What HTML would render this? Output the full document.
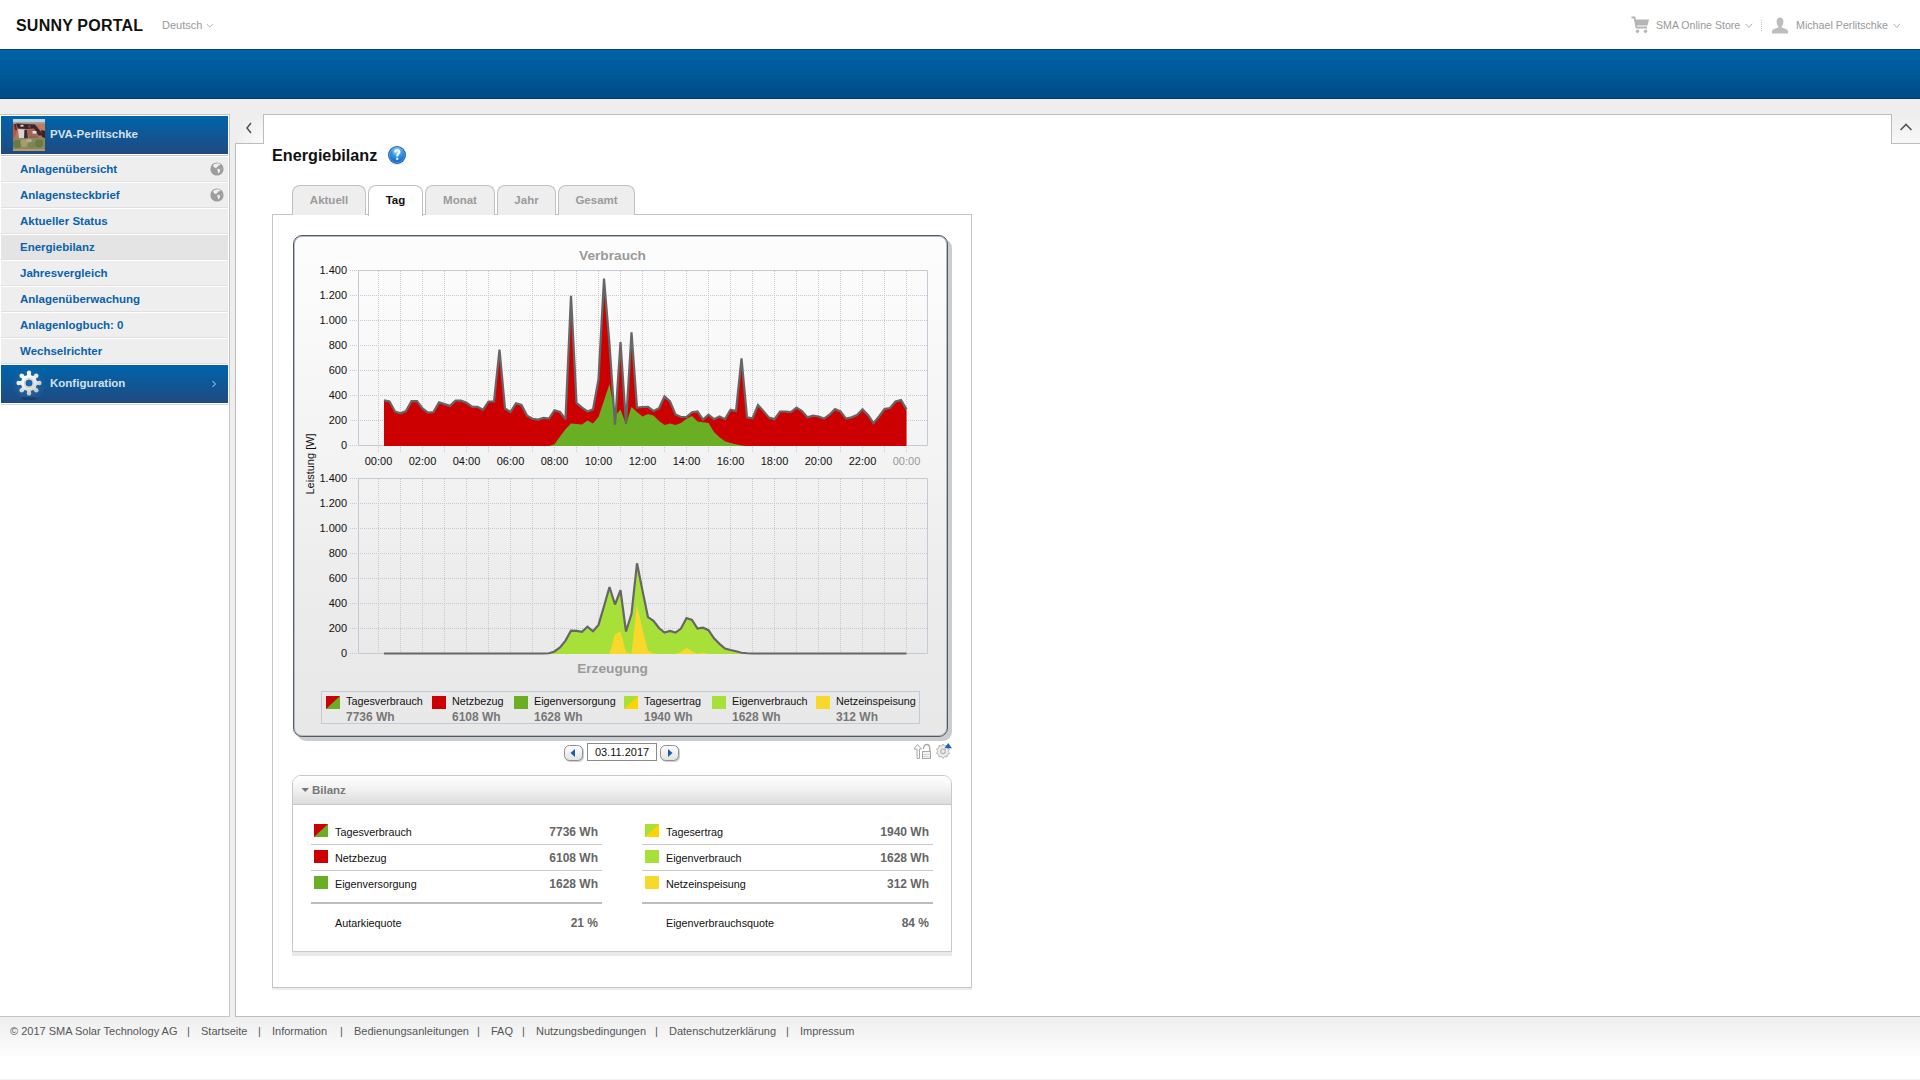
<!DOCTYPE html>
<html><head><meta charset="utf-8">
<style>
*{box-sizing:border-box}
html,body{margin:0;padding:0;width:1920px;height:1080px;overflow:hidden;background:#fff;font-family:"Liberation Sans",sans-serif;position:relative}
.a{position:absolute}
.t{position:absolute;white-space:nowrap;line-height:1}
</style></head><body>
<!-- header -->
<div class="t" style="left:16px;top:17.5px;font-size:16px;font-weight:700;color:#111;letter-spacing:0.2px">SUNNY PORTAL</div>
<div class="t" style="left:162px;top:20px;font-size:11px;color:#999">Deutsch</div>
<svg class="a" style="left:206px;top:23px" width="8" height="6"><path d="M0.8,1 L3.8,4.2 L6.8,1" fill="none" stroke="#b8b8b8" stroke-width="1"/></svg>

<div class="t" style="left:1656px;top:20px;font-size:10.6px;color:#999">SMA Online Store</div>
<div class="t" style="left:1796px;top:20px;font-size:10.7px;color:#999">Michael Perlitschke</div>

<svg class="a" style="left:1631px;top:16px" width="19" height="18" viewBox="0 0 19 18">
<path d="M0.5,1.5 L3.5,1.5 L5.5,11.5 L16,11.5" fill="none" stroke="#b5b5b5" stroke-width="1.8"/>
<path d="M4,3.5 L18,3.5 L16.5,9.5 L5.2,9.5 Z" fill="#b5b5b5"/>
<circle cx="6.5" cy="15.3" r="1.7" fill="#b5b5b5"/><circle cx="14.5" cy="15.3" r="1.7" fill="#b5b5b5"/>
</svg>
<svg class="a" style="left:1745px;top:23px" width="8" height="6"><path d="M0.5,0.8 L3.8,4.5 L7.2,0.8" fill="none" stroke="#b0b0b0" stroke-width="1"/></svg>
<svg class="a" style="left:1761px;top:20px" width="1" height="12"><path d="M0.5,0 V12" stroke="#c8c8c8" stroke-width="1" stroke-dasharray="1,1"/></svg>
<svg class="a" style="left:1771px;top:17px" width="18" height="17" viewBox="0 0 18 17">
<path d="M9,0.5 C11.6,0.5 12.6,2.6 12.4,5 C12.2,7.4 11.2,9 10.6,9.6 L10.8,10.6 C13.5,11.4 16.5,12.4 17,14 L17,16.5 L1,16.5 L1,14 C1.5,12.4 4.5,11.4 7.2,10.6 L7.4,9.6 C6.8,9 5.8,7.4 5.6,5 C5.4,2.6 6.4,0.5 9,0.5 Z" fill="#bdbdbd"/>
</svg>
<svg class="a" style="left:1893px;top:23px" width="8" height="6"><path d="M0.5,0.8 L3.8,4.5 L7.2,0.8" fill="none" stroke="#b0b0b0" stroke-width="1"/></svg>
<!-- blue bar -->
<div class="a" style="left:0;top:49px;width:1920px;height:50px;background:linear-gradient(#0063a9,#005a9c 40%,#004b87);border-top:1px solid #083f72;border-bottom:1px solid #043a6c"></div>
<!-- gray bg -->
<div class="a" style="left:0;top:99px;width:1920px;height:917px;background:#eeeeee"></div>
<div class="a" style="left:0;top:1016px;width:1920px;height:40px;background:linear-gradient(#eeeeee,#fdfdfd)"></div>

<!-- sidebar -->
<div class="a" style="left:0;top:114px;width:230px;height:903px;background:#fff;border:1px solid #c4c4c4;border-left:none"></div>
<div class="a" style="left:1px;top:116px;width:227px;height:38px;background:linear-gradient(#0064ab,#1f4a80)"></div>
<div class="a" style="left:1px;top:155px;width:227px;height:1px;background:#c8c8c8"></div>

<!-- content panel -->
<div class="a" style="left:235px;top:143px;width:1685px;height:874px;background:#fff;border:1px solid #bdbdbd;border-right:none"></div>
<div class="a" style="left:263px;top:114px;width:1629px;height:30px;background:#fff;border:1px solid #bdbdbd;border-bottom:none"></div>

<div class="a" style="left:1px;top:157px;width:227px;height:25px;background:#eeeeee;border-bottom:1px solid #e0e0e0"></div>
<div class="t" style="left:20px;top:164px;font-size:11.5px;font-weight:700;color:#0a62ab">Anlagenübersicht</div>
<div class="a" style="left:1px;top:183px;width:227px;height:25px;background:#eeeeee;border-bottom:1px solid #e0e0e0"></div>
<div class="t" style="left:20px;top:190px;font-size:11.5px;font-weight:700;color:#0a62ab">Anlagensteckbrief</div>
<div class="a" style="left:1px;top:209px;width:227px;height:25px;background:#eeeeee;border-bottom:1px solid #e0e0e0"></div>
<div class="t" style="left:20px;top:216px;font-size:11.5px;font-weight:700;color:#0a62ab">Aktueller Status</div>
<div class="a" style="left:1px;top:235px;width:227px;height:25px;background:#e4e4e4;border-bottom:1px solid #e0e0e0"></div>
<div class="t" style="left:20px;top:242px;font-size:11.5px;font-weight:700;color:#0a62ab">Energiebilanz</div>
<div class="a" style="left:1px;top:261px;width:227px;height:25px;background:#eeeeee;border-bottom:1px solid #e0e0e0"></div>
<div class="t" style="left:20px;top:268px;font-size:11.5px;font-weight:700;color:#0a62ab">Jahresvergleich</div>
<div class="a" style="left:1px;top:287px;width:227px;height:25px;background:#eeeeee;border-bottom:1px solid #e0e0e0"></div>
<div class="t" style="left:20px;top:294px;font-size:11.5px;font-weight:700;color:#0a62ab">Anlagenüberwachung</div>
<div class="a" style="left:1px;top:313px;width:227px;height:25px;background:#eeeeee;border-bottom:1px solid #e0e0e0"></div>
<div class="t" style="left:20px;top:320px;font-size:11.5px;font-weight:700;color:#0a62ab">Anlagenlogbuch: 0</div>
<div class="a" style="left:1px;top:339px;width:227px;height:25px;background:#eeeeee;border-bottom:1px solid #e0e0e0"></div>
<div class="t" style="left:20px;top:346px;font-size:11.5px;font-weight:700;color:#0a62ab">Wechselrichter</div>
<svg class="a" style="left:209.5px;top:161.5px" width="14" height="14" viewBox="0 0 14 14"><circle cx="7" cy="7" r="6.6" fill="#9d9d9d"/><path d="M3.0,3.6 C3.8,2.2 5.4,1.4 6.8,1.6 L8.0,1.2 L9.6,1.8 L10.6,2.6 L9.8,3.4 L8.6,3.0 L8.0,4.2 L6.8,5.4 L5.2,6.0 L4.0,5.2 Z M7.2,7.0 L9.0,6.8 L10.2,8.0 L9.8,9.8 L8.6,11.6 L8.0,10.6 L7.6,8.8 Z M11.2,6.2 L11.8,6.6 L11.4,7.4 Z" fill="#efefef"/></svg>
<svg class="a" style="left:209.5px;top:187.5px" width="14" height="14" viewBox="0 0 14 14"><circle cx="7" cy="7" r="6.6" fill="#9d9d9d"/><path d="M3.0,3.6 C3.8,2.2 5.4,1.4 6.8,1.6 L8.0,1.2 L9.6,1.8 L10.6,2.6 L9.8,3.4 L8.6,3.0 L8.0,4.2 L6.8,5.4 L5.2,6.0 L4.0,5.2 Z M7.2,7.0 L9.0,6.8 L10.2,8.0 L9.8,9.8 L8.6,11.6 L8.0,10.6 L7.6,8.8 Z M11.2,6.2 L11.8,6.6 L11.4,7.4 Z" fill="#efefef"/></svg>
<div class="a" style="left:1px;top:365px;width:227px;height:38px;background:linear-gradient(#0064ab,#1f4a80)"></div>
<div class="a" style="left:1px;top:404px;width:227px;height:1px;background:#d8d8d8"></div>
<div class="t" style="left:50px;top:378px;font-size:11.5px;font-weight:700;color:#d3e0ee">Konfiguration</div>
<svg class="a" style="left:211px;top:380px" width="6" height="8"><path d="M1.5,1 L4.5,4 L1.5,7" fill="none" stroke="#c5d5ea" stroke-width="1"/></svg>
<svg class="a" style="left:0;top:355px" width="60" height="60" viewBox="0 355 60 60"><defs>
<radialGradient id="glow" cx="0.5" cy="0.5" r="0.5"><stop offset="0" stop-color="#5d9ad0" stop-opacity="0.35"/><stop offset="1" stop-color="#5d9ad0" stop-opacity="0"/></radialGradient>
<radialGradient id="gg" gradientUnits="userSpaceOnUse" cx="26" cy="378" r="16"><stop offset="0" stop-color="#ffffff"/><stop offset="0.6" stop-color="#ececec"/><stop offset="1" stop-color="#c8c8c8"/></radialGradient></defs>
<circle cx="29" cy="385" r="17" fill="url(#glow)"/>
<ellipse cx="29" cy="398.5" rx="8" ry="1.6" fill="#0d2c55" opacity="0.45"/>
<g stroke="url(#gg)" stroke-width="3.8"><line x1="29.00" y1="377.00" x2="29.00" y2="372.60"/><line x1="33.24" y1="378.76" x2="36.35" y2="375.65"/><line x1="35.00" y1="383.00" x2="39.40" y2="383.00"/><line x1="33.24" y1="387.24" x2="36.35" y2="390.35"/><line x1="29.00" y1="389.00" x2="29.00" y2="393.40"/><line x1="24.76" y1="387.24" x2="21.65" y2="390.35"/><line x1="23.00" y1="383.00" x2="18.60" y2="383.00"/><line x1="24.76" y1="378.76" x2="21.65" y2="375.65"/></g>
<g fill="url(#gg)"><circle cx="29.00" cy="372.60" r="2.2"/><circle cx="36.35" cy="375.65" r="2.2"/><circle cx="39.40" cy="383.00" r="2.2"/><circle cx="36.35" cy="390.35" r="2.2"/><circle cx="29.00" cy="393.40" r="2.2"/><circle cx="21.65" cy="390.35" r="2.2"/><circle cx="18.60" cy="383.00" r="2.2"/><circle cx="21.65" cy="375.65" r="2.2"/></g>
<circle cx="29" cy="383" r="8" fill="url(#gg)"/>
<circle cx="29" cy="383" r="4.6" fill="none" stroke="#d4d4d4" stroke-width="1.2"/>
<circle cx="29" cy="383" r="3.5" fill="#1f64a6"/>
</svg>
<div class="t" style="left:50px;top:129px;font-size:11.5px;font-weight:700;color:#d3e0ee">PVA-Perlitschke</div>
<svg class="a" style="left:13px;top:119px" width="32" height="32" viewBox="0 0 32 32">
<defs><filter id="bl" x="-10%" y="-10%" width="120%" height="120%"><feGaussianBlur stdDeviation="0.35"/></filter><clipPath id="cp"><rect width="32" height="32"/></clipPath></defs>
<g clip-path="url(#cp)"><g filter="url(#bl)">
<rect x="-2" y="-2" width="36" height="36" fill="#b2785e"/>
<rect x="-2" y="-2" width="36" height="5.5" fill="#b4d8f0"/>
<path d="M-2,3.5 L34,3.5 L34,5.5 L-2,5.5 Z" fill="#b89080"/>
<path d="M-2,5 L3,5 L4,12 L1,20 L-2,20 Z" fill="#b85a3a"/>
<path d="M1,5 L3,5 L4,11 L2,11 Z" fill="#5a2a22"/>
<path d="M3,4.5 L22,5.5 L28,13 L29.5,16.5 L25.5,16.5 L21,9.5 L14,10 L5,9.5 Z" fill="#3a262e"/>
<rect x="7.5" y="5.8" width="3" height="1.8" fill="#e0dde0"/>
<rect x="15" y="6.5" width="2.5" height="2" fill="#6a5060"/>
<path d="M5,10 L11.5,10.5 L11.5,19 L6,19 Z" fill="#d8d4d0"/>
<path d="M11.5,11 L14,11 L15,20 L11,20 Z" fill="#352a3a"/>
<path d="M14,10.5 L21,10 L24,16 L16,18 Z" fill="#a66450"/>
<rect x="19.5" y="12" width="4" height="2.6" fill="#e4dedc"/>
<path d="M16,17 L25,16.5 L25,19.5 L16,20 Z" fill="#7e6a60"/>
<path d="M28,11 L32,12 L32,19 L29,18 Z" fill="#3a2228"/>
<path d="M25,5 L34,5 L34,11 L28,11 Z" fill="#c07e5e"/>
<path d="M-2,20 C4,18 9,20 14,19 C19,20 25,18 34,20 L34,34 L-2,34 Z" fill="#8c8858"/>
<ellipse cx="4" cy="25" rx="4" ry="4" fill="#667a48"/>
<ellipse cx="11" cy="24" rx="3.5" ry="4" fill="#a89a70"/>
<ellipse cx="19" cy="26" rx="4" ry="3" fill="#7a8650"/>
<ellipse cx="26" cy="24.5" rx="4" ry="4" fill="#6a7a44"/>
<ellipse cx="16" cy="21.5" rx="3" ry="1.8" fill="#b8a890"/>
<rect x="-2" y="30" width="36" height="4" fill="#bc9670"/>
</g></g></svg>
<div class="a" style="left:236px;top:115px;width:27px;height:28px;background:radial-gradient(circle at 90% 90%, #fafafa 0, #eeeeee 70%)"></div>
<svg class="a" style="left:244px;top:121px" width="10" height="14"><path d="M7,2 L3,7 L7,12" fill="none" stroke="#555" stroke-width="1.6"/></svg>
<div class="a" style="left:1892px;top:115px;width:28px;height:28px;background:linear-gradient(#eeeeee,#f8f8f8)"></div>
<svg class="a" style="left:1899px;top:122px" width="14" height="10"><path d="M1.5,8 L7,2.5 L12.5,8" fill="none" stroke="#555" stroke-width="1.6"/></svg>
<div class="t" style="left:272px;top:147px;font-size:16.2px;font-weight:700;color:#111">Energiebilanz</div>
<svg class="a" style="left:386px;top:144px" width="22" height="22" viewBox="0 0 22 22"><defs><radialGradient id="hq" cx="0.5" cy="0.25" r="0.75"><stop offset="0" stop-color="#c8f0ff"/><stop offset="0.45" stop-color="#3d96e0"/><stop offset="1" stop-color="#0a62c0"/></radialGradient></defs>
<ellipse cx="11" cy="19.5" rx="7" ry="1.5" fill="#000" opacity="0.08"/>
<circle cx="11" cy="11" r="9" fill="#1d62b8"/><circle cx="11" cy="11" r="7.8" fill="url(#hq)"/><circle cx="11" cy="11" r="7.6" fill="none" stroke="#8ec8f0" stroke-width="0.6" opacity="0.7"/>
<path d="M8.2,8.3 C8.2,6.2 9.5,5.2 11.2,5.2 C13,5.2 14.3,6.3 14.3,7.9 C14.3,9.9 12.1,10.2 12.1,12.5 L10.3,12.5 C10.3,9.7 12.3,9.5 12.3,8 C12.3,7.2 11.9,6.8 11.1,6.8 C10.3,6.8 10,7.4 10,8.3 Z" fill="#fff"/><rect x="10.2" y="13.8" width="2" height="2" fill="#fff"/></svg>
<div class="a" style="left:272px;top:214px;width:700px;height:774px;border:1px solid #c4c4c4;background:#fff;box-shadow:0 2px 0 #ededed"></div>
<div class="a" style="left:292px;top:185px;width:74px;height:30px;background:#eeeeee;border:1px solid #c0c0c0;border-bottom:none;border-radius:8px 8px 0 0"></div>
<div class="t" style="left:292px;width:74px;text-align:center;top:195px;font-size:11.5px;font-weight:700;color:#9a9a9a">Aktuell</div>
<div class="a" style="left:368px;top:185px;width:55px;height:31px;background:#fff;border:1px solid #c0c0c0;border-bottom:none;border-radius:8px 8px 0 0"></div>
<div class="t" style="left:368px;width:55px;text-align:center;top:195px;font-size:11.5px;font-weight:700;color:#111">Tag</div>
<div class="a" style="left:425px;top:185px;width:70px;height:30px;background:#eeeeee;border:1px solid #c0c0c0;border-bottom:none;border-radius:8px 8px 0 0"></div>
<div class="t" style="left:425px;width:70px;text-align:center;top:195px;font-size:11.5px;font-weight:700;color:#9a9a9a">Monat</div>
<div class="a" style="left:497px;top:185px;width:59px;height:30px;background:#eeeeee;border:1px solid #c0c0c0;border-bottom:none;border-radius:8px 8px 0 0"></div>
<div class="t" style="left:497px;width:59px;text-align:center;top:195px;font-size:11.5px;font-weight:700;color:#9a9a9a">Jahr</div>
<div class="a" style="left:558px;top:185px;width:77px;height:30px;background:#eeeeee;border:1px solid #c0c0c0;border-bottom:none;border-radius:8px 8px 0 0"></div>
<div class="t" style="left:558px;width:77px;text-align:center;top:195px;font-size:11.5px;font-weight:700;color:#9a9a9a">Gesamt</div>
<div class="a" style="left:297px;top:239px;width:655px;height:502px;background:#cccccc;border-radius:9px"></div>
<div class="a" style="left:293px;top:235px;width:655px;height:502px;border:1px solid #4f5b67;box-shadow:inset 0 0 0 1px #b4bbc2;border-radius:9px;background:linear-gradient(#fdfdfd,#f3f3f3 45%,#ebebeb 75%,#e8e8e8)"></div>
<svg style="position:absolute;left:0;top:0" width="1920" height="1080">
<defs>
<linearGradient id="plotbg" x1="0" y1="0" x2="0" y2="1"><stop offset="0" stop-color="#fcfcfc"/><stop offset="1" stop-color="#f2f2f2"/></linearGradient>
<linearGradient id="plotbg2" x1="0" y1="0" x2="0" y2="1"><stop offset="0" stop-color="#f2f2f2"/><stop offset="1" stop-color="#eaeaea"/></linearGradient>
</defs>
<g stroke="#c3cad2" stroke-width="1" stroke-dasharray="1,1" fill="none">
<line x1="350" y1="420.5" x2="927" y2="420.5" /><line x1="350" y1="395.5" x2="927" y2="395.5" /><line x1="350" y1="370.5" x2="927" y2="370.5" /><line x1="350" y1="345.5" x2="927" y2="345.5" /><line x1="350" y1="320.5" x2="927" y2="320.5" /><line x1="350" y1="295.5" x2="927" y2="295.5" /><line x1="350" y1="270.5" x2="927" y2="270.5" /><line x1="350" y1="445.5" x2="358" y2="445.5" /><line x1="378.5" y1="271" x2="378.5" y2="453" /><line x1="400.5" y1="271" x2="400.5" y2="453" /><line x1="422.5" y1="271" x2="422.5" y2="453" /><line x1="444.5" y1="271" x2="444.5" y2="453" /><line x1="466.5" y1="271" x2="466.5" y2="453" /><line x1="488.5" y1="271" x2="488.5" y2="453" /><line x1="510.5" y1="271" x2="510.5" y2="453" /><line x1="532.5" y1="271" x2="532.5" y2="453" /><line x1="554.5" y1="271" x2="554.5" y2="453" /><line x1="576.5" y1="271" x2="576.5" y2="453" /><line x1="598.5" y1="271" x2="598.5" y2="453" /><line x1="620.5" y1="271" x2="620.5" y2="453" /><line x1="642.5" y1="271" x2="642.5" y2="453" /><line x1="664.5" y1="271" x2="664.5" y2="453" /><line x1="686.5" y1="271" x2="686.5" y2="453" /><line x1="708.5" y1="271" x2="708.5" y2="453" /><line x1="730.5" y1="271" x2="730.5" y2="453" /><line x1="752.5" y1="271" x2="752.5" y2="453" /><line x1="774.5" y1="271" x2="774.5" y2="453" /><line x1="796.5" y1="271" x2="796.5" y2="453" /><line x1="818.5" y1="271" x2="818.5" y2="453" /><line x1="840.5" y1="271" x2="840.5" y2="453" /><line x1="862.5" y1="271" x2="862.5" y2="453" /><line x1="884.5" y1="271" x2="884.5" y2="453" /><line x1="906.5" y1="271" x2="906.5" y2="453" />
<line x1="350" y1="628.5" x2="927" y2="628.5" /><line x1="350" y1="603.5" x2="927" y2="603.5" /><line x1="350" y1="578.5" x2="927" y2="578.5" /><line x1="350" y1="553.5" x2="927" y2="553.5" /><line x1="350" y1="528.5" x2="927" y2="528.5" /><line x1="350" y1="503.5" x2="927" y2="503.5" /><line x1="350" y1="478.5" x2="927" y2="478.5" /><line x1="350" y1="653.5" x2="358" y2="653.5" /><line x1="378.5" y1="479" x2="378.5" y2="654" /><line x1="400.5" y1="479" x2="400.5" y2="654" /><line x1="422.5" y1="479" x2="422.5" y2="654" /><line x1="444.5" y1="479" x2="444.5" y2="654" /><line x1="466.5" y1="479" x2="466.5" y2="654" /><line x1="488.5" y1="479" x2="488.5" y2="654" /><line x1="510.5" y1="479" x2="510.5" y2="654" /><line x1="532.5" y1="479" x2="532.5" y2="654" /><line x1="554.5" y1="479" x2="554.5" y2="654" /><line x1="576.5" y1="479" x2="576.5" y2="654" /><line x1="598.5" y1="479" x2="598.5" y2="654" /><line x1="620.5" y1="479" x2="620.5" y2="654" /><line x1="642.5" y1="479" x2="642.5" y2="654" /><line x1="664.5" y1="479" x2="664.5" y2="654" /><line x1="686.5" y1="479" x2="686.5" y2="654" /><line x1="708.5" y1="479" x2="708.5" y2="654" /><line x1="730.5" y1="479" x2="730.5" y2="654" /><line x1="752.5" y1="479" x2="752.5" y2="654" /><line x1="774.5" y1="479" x2="774.5" y2="654" /><line x1="796.5" y1="479" x2="796.5" y2="654" /><line x1="818.5" y1="479" x2="818.5" y2="654" /><line x1="840.5" y1="479" x2="840.5" y2="654" /><line x1="862.5" y1="479" x2="862.5" y2="654" /><line x1="884.5" y1="479" x2="884.5" y2="654" /><line x1="906.5" y1="479" x2="906.5" y2="654" />
</g>
<g fill="none" stroke="#c3cad2" stroke-width="1">
<path d="M358.5,270.5 H927.5 V445.5 H358.5 Z"/>
<path d="M358.5,478.5 H927.5 V653.5 H358.5 Z"/>
</g>
<path d="M384.00,446.00 L384.00,400.75 L389.50,402.00 L395.00,412.00 L400.50,413.75 L406.00,411.62 L411.50,401.62 L417.00,401.62 L422.50,409.00 L428.00,413.12 L433.50,412.50 L439.00,402.88 L444.50,404.62 L450.00,406.38 L455.50,401.12 L461.00,401.12 L466.50,403.25 L472.00,407.25 L477.50,407.25 L483.00,410.25 L488.50,402.00 L494.00,402.00 L499.50,350.00 L505.00,409.00 L510.50,412.50 L516.00,403.75 L521.50,405.50 L527.00,416.12 L532.50,419.25 L538.00,420.12 L543.50,418.38 L549.00,419.12 L554.50,410.75 L560.00,412.50 L565.50,419.62 L571.00,296.38 L576.50,403.25 L582.00,408.12 L587.50,412.00 L593.00,409.88 L598.50,379.75 L604.00,279.12 L609.50,344.75 L615.00,425.12 L620.50,342.50 L626.00,424.38 L631.50,332.75 L637.00,408.12 L642.50,407.50 L648.00,407.25 L653.50,411.38 L659.00,408.62 L664.50,396.75 L670.00,402.00 L675.50,414.88 L681.00,417.50 L686.50,417.50 L692.00,412.75 L697.50,412.00 L703.00,420.12 L708.50,415.25 L714.00,419.62 L719.50,417.00 L725.00,419.62 L730.50,410.25 L736.00,411.62 L741.50,358.88 L747.00,417.88 L752.50,418.75 L758.00,405.50 L763.50,411.62 L769.00,418.12 L774.50,419.62 L780.00,412.00 L785.50,412.00 L791.00,412.50 L796.50,408.12 L802.00,411.62 L807.50,417.88 L813.00,416.12 L818.50,417.00 L824.00,419.12 L829.50,415.25 L835.00,409.50 L840.50,412.00 L846.00,419.12 L851.50,417.88 L857.00,415.50 L862.50,409.88 L868.00,415.50 L873.50,423.62 L879.00,417.00 L884.50,409.50 L890.00,408.50 L895.50,402.00 L901.00,400.62 L906.50,409.88 L906.50,446.00 Z" fill="#cc0000"/>
<path d="M549.00,446.00 L549.00,446.00 L554.50,444.25 L560.00,436.38 L565.50,429.25 L571.00,423.62 L576.50,424.00 L582.00,424.38 L587.50,420.50 L593.00,423.62 L598.50,417.00 L604.00,400.50 L609.50,383.88 L615.00,415.50 L620.50,409.62 L626.00,424.62 L631.50,407.12 L637.00,412.12 L642.50,416.38 L648.00,413.88 L653.50,415.50 L659.00,421.00 L664.50,424.88 L670.00,423.62 L675.50,424.88 L681.00,423.12 L686.50,418.75 L692.00,416.12 L697.50,421.38 L703.00,422.25 L708.50,423.12 L714.00,431.88 L719.50,437.25 L725.00,441.25 L730.50,443.00 L736.00,444.25 L741.50,445.50 L747.00,446.00 L747.00,446.00 Z" fill="#6aae23"/>
<path d="M384.00,400.25 L389.50,401.50 L395.00,411.50 L400.50,413.25 L406.00,411.12 L411.50,401.12 L417.00,401.12 L422.50,408.50 L428.00,412.62 L433.50,412.00 L439.00,402.38 L444.50,404.12 L450.00,405.88 L455.50,400.62 L461.00,400.62 L466.50,402.75 L472.00,406.75 L477.50,406.75 L483.00,409.75 L488.50,401.50 L494.00,401.50 L499.50,349.50 L505.00,408.50 L510.50,412.00 L516.00,403.25 L521.50,405.00 L527.00,415.62 L532.50,418.75 L538.00,419.62 L543.50,417.88 L549.00,418.62 L554.50,410.25 L560.00,412.00 L565.50,419.12 L571.00,295.88 L576.50,402.75 L582.00,407.62 L587.50,411.50 L593.00,409.38 L598.50,379.25 L604.00,278.62 L609.50,344.25 L615.00,424.62 L620.50,342.00 L626.00,423.88 L631.50,332.25 L637.00,407.62 L642.50,407.00 L648.00,406.75 L653.50,410.88 L659.00,408.12 L664.50,396.25 L670.00,401.50 L675.50,414.38 L681.00,417.00 L686.50,417.00 L692.00,412.25 L697.50,411.50 L703.00,419.62 L708.50,414.75 L714.00,419.12 L719.50,416.50 L725.00,419.12 L730.50,409.75 L736.00,411.12 L741.50,358.38 L747.00,417.38 L752.50,418.25 L758.00,405.00 L763.50,411.12 L769.00,417.62 L774.50,419.12 L780.00,411.50 L785.50,411.50 L791.00,412.00 L796.50,407.62 L802.00,411.12 L807.50,417.38 L813.00,415.62 L818.50,416.50 L824.00,418.62 L829.50,414.75 L835.00,409.00 L840.50,411.50 L846.00,418.62 L851.50,417.38 L857.00,415.00 L862.50,409.38 L868.00,415.00 L873.50,423.12 L879.00,416.50 L884.50,409.00 L890.00,408.00 L895.50,401.50 L901.00,400.12 L906.50,409.38 " fill="none" stroke="#666" stroke-width="2.2" stroke-linejoin="miter" stroke-miterlimit="2.5"/>
<path d="M543.50,654.00 L543.50,654.00 L549.00,653.75 L554.50,652.00 L560.00,648.00 L565.50,641.12 L571.00,631.12 L576.50,631.38 L582.00,632.25 L587.50,627.12 L593.00,631.75 L598.50,625.38 L604.00,606.75 L609.50,587.50 L615.00,605.00 L620.50,590.75 L626.00,632.00 L631.50,614.25 L637.00,563.75 L642.50,591.25 L648.00,617.62 L653.50,621.38 L659.00,628.50 L664.50,633.12 L670.00,631.38 L675.50,633.12 L681.00,629.12 L686.50,618.50 L692.00,620.50 L697.50,629.12 L703.00,628.25 L708.50,630.62 L714.00,638.88 L719.50,644.38 L725.00,649.00 L730.50,650.50 L736.00,651.75 L741.50,653.25 L747.00,653.75 L752.50,654.00 L752.50,654.00 Z" fill="#a8e03a"/>
<path d="M609.50,654.00 L609.50,654.00 L615.00,634.25 L620.50,631.38 L626.00,652.00 L631.50,654.00 L637.00,604.50 L642.50,629.25 L648.00,650.88 L653.50,653.25 L659.00,654.00 L675.50,654.00 L681.00,652.00 L686.50,647.75 L692.00,651.50 L697.50,654.00 L703.00,652.62 L708.50,654.00 L708.50,654.00 Z" fill="#f8d82a"/>
<path d="M384.00,653.50 L389.50,653.50 L395.00,653.50 L400.50,653.50 L406.00,653.50 L411.50,653.50 L417.00,653.50 L422.50,653.50 L428.00,653.50 L433.50,653.50 L439.00,653.50 L444.50,653.50 L450.00,653.50 L455.50,653.50 L461.00,653.50 L466.50,653.50 L472.00,653.50 L477.50,653.50 L483.00,653.50 L488.50,653.50 L494.00,653.50 L499.50,653.50 L505.00,653.50 L510.50,653.50 L516.00,653.50 L521.50,653.50 L527.00,653.50 L532.50,653.50 L538.00,653.50 L543.50,653.50 L549.00,653.25 L554.50,651.50 L560.00,647.50 L565.50,640.62 L571.00,630.62 L576.50,630.88 L582.00,631.75 L587.50,626.62 L593.00,631.25 L598.50,624.88 L604.00,606.25 L609.50,587.00 L615.00,604.50 L620.50,590.25 L626.00,631.50 L631.50,613.75 L637.00,563.25 L642.50,590.75 L648.00,617.12 L653.50,620.88 L659.00,628.00 L664.50,632.62 L670.00,630.88 L675.50,632.62 L681.00,628.62 L686.50,618.00 L692.00,620.00 L697.50,628.62 L703.00,627.75 L708.50,630.12 L714.00,638.38 L719.50,643.88 L725.00,648.50 L730.50,650.00 L736.00,651.25 L741.50,652.75 L747.00,653.25 L752.50,653.50 L758.00,653.50 L763.50,653.50 L769.00,653.50 L774.50,653.50 L780.00,653.50 L785.50,653.50 L791.00,653.50 L796.50,653.50 L802.00,653.50 L807.50,653.50 L813.00,653.50 L818.50,653.50 L824.00,653.50 L829.50,653.50 L835.00,653.50 L840.50,653.50 L846.00,653.50 L851.50,653.50 L857.00,653.50 L862.50,653.50 L868.00,653.50 L873.50,653.50 L879.00,653.50 L884.50,653.50 L890.00,653.50 L895.50,653.50 L901.00,653.50 L906.50,653.50 " fill="none" stroke="#666" stroke-width="2.2" stroke-linejoin="miter" stroke-miterlimit="2.5"/>
</svg>
<div class="a" style="left:0;top:1079px;width:1920px;height:1px;background:#efefef"></div>
<div class="t" style="left:265px;width:695px;text-align:center;top:249px;font-size:13.7px;font-weight:700;color:#9a9a9a">Verbrauch</div>
<div class="t" style="left:265px;width:695px;text-align:center;top:662px;font-size:13.7px;font-weight:700;color:#9a9a9a">Erzeugung</div>
<div class="t" style="left:287px;width:60px;text-align:right;top:440px;font-size:11px;color:#111">0</div>
<div class="t" style="left:287px;width:60px;text-align:right;top:648px;font-size:11px;color:#111">0</div>
<div class="t" style="left:287px;width:60px;text-align:right;top:415px;font-size:11px;color:#111">200</div>
<div class="t" style="left:287px;width:60px;text-align:right;top:623px;font-size:11px;color:#111">200</div>
<div class="t" style="left:287px;width:60px;text-align:right;top:390px;font-size:11px;color:#111">400</div>
<div class="t" style="left:287px;width:60px;text-align:right;top:598px;font-size:11px;color:#111">400</div>
<div class="t" style="left:287px;width:60px;text-align:right;top:365px;font-size:11px;color:#111">600</div>
<div class="t" style="left:287px;width:60px;text-align:right;top:573px;font-size:11px;color:#111">600</div>
<div class="t" style="left:287px;width:60px;text-align:right;top:340px;font-size:11px;color:#111">800</div>
<div class="t" style="left:287px;width:60px;text-align:right;top:548px;font-size:11px;color:#111">800</div>
<div class="t" style="left:287px;width:60px;text-align:right;top:315px;font-size:11px;color:#111">1.000</div>
<div class="t" style="left:287px;width:60px;text-align:right;top:523px;font-size:11px;color:#111">1.000</div>
<div class="t" style="left:287px;width:60px;text-align:right;top:290px;font-size:11px;color:#111">1.200</div>
<div class="t" style="left:287px;width:60px;text-align:right;top:498px;font-size:11px;color:#111">1.200</div>
<div class="t" style="left:287px;width:60px;text-align:right;top:265px;font-size:11px;color:#111">1.400</div>
<div class="t" style="left:287px;width:60px;text-align:right;top:473px;font-size:11px;color:#111">1.400</div>
<div class="t" style="left:358.5px;width:40px;text-align:center;top:456px;font-size:11px;color:#111">00:00</div>
<div class="t" style="left:402.5px;width:40px;text-align:center;top:456px;font-size:11px;color:#111">02:00</div>
<div class="t" style="left:446.5px;width:40px;text-align:center;top:456px;font-size:11px;color:#111">04:00</div>
<div class="t" style="left:490.5px;width:40px;text-align:center;top:456px;font-size:11px;color:#111">06:00</div>
<div class="t" style="left:534.5px;width:40px;text-align:center;top:456px;font-size:11px;color:#111">08:00</div>
<div class="t" style="left:578.5px;width:40px;text-align:center;top:456px;font-size:11px;color:#111">10:00</div>
<div class="t" style="left:622.5px;width:40px;text-align:center;top:456px;font-size:11px;color:#111">12:00</div>
<div class="t" style="left:666.5px;width:40px;text-align:center;top:456px;font-size:11px;color:#111">14:00</div>
<div class="t" style="left:710.5px;width:40px;text-align:center;top:456px;font-size:11px;color:#111">16:00</div>
<div class="t" style="left:754.5px;width:40px;text-align:center;top:456px;font-size:11px;color:#111">18:00</div>
<div class="t" style="left:798.5px;width:40px;text-align:center;top:456px;font-size:11px;color:#111">20:00</div>
<div class="t" style="left:842.5px;width:40px;text-align:center;top:456px;font-size:11px;color:#111">22:00</div>
<div class="t" style="left:886.5px;width:40px;text-align:center;top:456px;font-size:11px;color:#999">00:00</div>
<div class="t" style="left:280px;top:459px;width:60px;text-align:center;font-size:11px;color:#111;transform:rotate(-90deg)">Leistung [W]</div>
<div class="a" style="left:321px;top:691px;width:599px;height:33px;border:1px solid #c3cad2"></div>
<svg class="a" style="left:326px;top:696px" width="14" height="13"><rect width="14" height="13" fill="#6aae23"/><path d="M0,0 L14,0 L0,13 Z" fill="#cc0000"/></svg>
<div class="t" style="left:346px;top:696px;font-size:10.8px;color:#111">Tagesverbrauch</div>
<div class="t" style="left:346px;top:711px;font-size:12px;font-weight:700;color:#777">7736 Wh</div>
<div class="a" style="left:432px;top:696px;width:14px;height:13px;background:#cc0000"></div>
<div class="t" style="left:452px;top:696px;font-size:10.8px;color:#111">Netzbezug</div>
<div class="t" style="left:452px;top:711px;font-size:12px;font-weight:700;color:#777">6108 Wh</div>
<div class="a" style="left:514px;top:696px;width:14px;height:13px;background:#6aae23"></div>
<div class="t" style="left:534px;top:696px;font-size:10.8px;color:#111">Eigenversorgung</div>
<div class="t" style="left:534px;top:711px;font-size:12px;font-weight:700;color:#777">1628 Wh</div>
<svg class="a" style="left:624px;top:696px" width="14" height="13"><rect width="14" height="13" fill="#ffd200"/><path d="M0,0 L14,0 L0,13 Z" fill="#a8e03a"/></svg>
<div class="t" style="left:644px;top:696px;font-size:10.8px;color:#111">Tagesertrag</div>
<div class="t" style="left:644px;top:711px;font-size:12px;font-weight:700;color:#777">1940 Wh</div>
<div class="a" style="left:712px;top:696px;width:14px;height:13px;background:#a8e03a"></div>
<div class="t" style="left:732px;top:696px;font-size:10.8px;color:#111">Eigenverbrauch</div>
<div class="t" style="left:732px;top:711px;font-size:12px;font-weight:700;color:#777">1628 Wh</div>
<div class="a" style="left:816px;top:696px;width:14px;height:13px;background:#f8d82a"></div>
<div class="t" style="left:836px;top:696px;font-size:10.8px;color:#111">Netzeinspeisung</div>
<div class="t" style="left:836px;top:711px;font-size:12px;font-weight:700;color:#777">312 Wh</div>
<svg class="a" style="left:563px;top:744px" width="22" height="19" viewBox="0 0 22 19"><defs><linearGradient id="bg564" x1="0" y1="0" x2="0" y2="1"><stop offset="0" stop-color="#ffffff"/><stop offset="1" stop-color="#e2e2e2"/></linearGradient></defs><rect x="2" y="2" width="19" height="16" rx="5" fill="#d0d0d0"/><rect x="1.5" y="1.5" width="18" height="15" rx="5" fill="url(#bg564)" stroke="#8f8f8f" stroke-width="1"/><path d="M7.5,9 L12,5 L12,13 Z" fill="#1a5bb0"/></svg>
<svg class="a" style="left:659px;top:744px" width="22" height="19" viewBox="0 0 22 19"><defs><linearGradient id="bg660" x1="0" y1="0" x2="0" y2="1"><stop offset="0" stop-color="#ffffff"/><stop offset="1" stop-color="#e2e2e2"/></linearGradient></defs><rect x="2" y="2" width="19" height="16" rx="5" fill="#d0d0d0"/><rect x="1.5" y="1.5" width="18" height="15" rx="5" fill="url(#bg660)" stroke="#8f8f8f" stroke-width="1"/><path d="M13.5,9 L9,5 L9,13 Z" fill="#1a5bb0"/></svg>
<div class="a" style="left:587px;top:743px;width:70px;height:18px;border:1px solid #8a8a8a;background:#fff"></div>
<div class="t" style="left:587px;width:70px;text-align:center;top:747px;font-size:11px;color:#111">03.11.2017</div>
<svg class="a" style="left:912px;top:742px" width="40" height="20" viewBox="0 0 40 20">
<path d="M5.5,2.5 L9.5,7 L7.5,7 L7.5,16.5 L5,16.5 L5,7 L2,7 Z" fill="#fff" stroke="#a8a8a8" stroke-width="1"/>
<path d="M11.5,7 C11.5,3.8 12.8,2.5 14.7,2.5 C16.6,2.5 17.8,3.8 17.8,7 L17.8,9.5" fill="none" stroke="#a8a8a8" stroke-width="1.3"/>
<rect x="10.5" y="9.5" width="8" height="7" fill="#f4f4f4" stroke="#a8a8a8" stroke-width="1"/>
<path d="M11,12.5 H18 M11,14.5 H18" stroke="#cfcfcf" stroke-width="0.8"/>
<path d="M31,2 L32.5,4 L35,3.5 L35.3,6 L37.5,7 L36.3,9.3 L37.5,11.5 L35.3,12.5 L35,15 L32.5,14.5 L31,16.5 L29.5,14.5 L27,15 L26.7,12.5 L24.5,11.5 L25.7,9.3 L24.5,7 L26.7,6 L27,3.5 L29.5,4 Z" fill="#ececec" stroke="#b5b5b5" stroke-width="1"/>
<circle cx="31" cy="9.3" r="2.3" fill="none" stroke="#b5b5b5" stroke-width="1.2"/>
<path d="M32.5,6.2 L40,6.2 L36.2,1 Z" fill="#1766c8"/>
</svg>
<div class="a" style="left:292px;top:775px;width:660px;height:181px;background:#e9e9e9;border-radius:9px 9px 0 0"></div>
<div class="a" style="left:292px;top:775px;width:660px;height:177px;border:1px solid #c8c8c8;border-radius:9px 9px 0 0;background:#fff"></div>
<div class="a" style="left:293px;top:776px;width:658px;height:29px;border-bottom:1px solid #c8c8c8;border-radius:8px 8px 0 0;background:linear-gradient(#ffffff,#f2f2f2 45%,#dcdcdc)"></div>
<svg class="a" style="left:301px;top:787px" width="9" height="6"><path d="M0.5,1 L8,1 L4.25,5 Z" fill="#777"/></svg>
<div class="t" style="left:312px;top:785px;font-size:11.5px;font-weight:700;color:#777">Bilanz</div>
<svg class="a" style="left:314px;top:824px" width="14" height="13"><rect width="14" height="13" fill="#6aae23"/><path d="M0,0 L14,0 L0,13 Z" fill="#cc0000"/></svg>
<div class="t" style="left:335px;top:827px;font-size:10.8px;color:#111">Tagesverbrauch</div>
<div class="t" style="left:401px;width:197px;text-align:right;top:826px;font-size:12px;font-weight:700;color:#666">7736 Wh</div>
<div class="a" style="left:311px;top:844px;width:291px;height:1px;background:#c8c8c8"></div>
<div class="a" style="left:314px;top:850px;width:14px;height:13px;background:#cc0000"></div>
<div class="t" style="left:335px;top:853px;font-size:10.8px;color:#111">Netzbezug</div>
<div class="t" style="left:401px;width:197px;text-align:right;top:852px;font-size:12px;font-weight:700;color:#666">6108 Wh</div>
<div class="a" style="left:311px;top:870px;width:291px;height:1px;background:#c8c8c8"></div>
<div class="a" style="left:314px;top:876px;width:14px;height:13px;background:#6aae23"></div>
<div class="t" style="left:335px;top:879px;font-size:10.8px;color:#111">Eigenversorgung</div>
<div class="t" style="left:401px;width:197px;text-align:right;top:878px;font-size:12px;font-weight:700;color:#666">1628 Wh</div>
<div class="a" style="left:311px;top:902px;width:291px;height:2px;background:#bdbdbd"></div>
<div class="t" style="left:335px;top:918px;font-size:10.8px;color:#111">Autarkiequote</div>
<div class="t" style="left:401px;width:197px;text-align:right;top:917px;font-size:12px;font-weight:700;color:#666">21 %</div>
<svg class="a" style="left:645px;top:824px" width="14" height="13"><rect width="14" height="13" fill="#ffd200"/><path d="M0,0 L14,0 L0,13 Z" fill="#a8e03a"/></svg>
<div class="t" style="left:666px;top:827px;font-size:10.8px;color:#111">Tagesertrag</div>
<div class="t" style="left:732px;width:197px;text-align:right;top:826px;font-size:12px;font-weight:700;color:#666">1940 Wh</div>
<div class="a" style="left:642px;top:844px;width:291px;height:1px;background:#c8c8c8"></div>
<div class="a" style="left:645px;top:850px;width:14px;height:13px;background:#a8e03a"></div>
<div class="t" style="left:666px;top:853px;font-size:10.8px;color:#111">Eigenverbrauch</div>
<div class="t" style="left:732px;width:197px;text-align:right;top:852px;font-size:12px;font-weight:700;color:#666">1628 Wh</div>
<div class="a" style="left:642px;top:870px;width:291px;height:1px;background:#c8c8c8"></div>
<div class="a" style="left:645px;top:876px;width:14px;height:13px;background:#f8d82a"></div>
<div class="t" style="left:666px;top:879px;font-size:10.8px;color:#111">Netzeinspeisung</div>
<div class="t" style="left:732px;width:197px;text-align:right;top:878px;font-size:12px;font-weight:700;color:#666">312 Wh</div>
<div class="a" style="left:642px;top:902px;width:291px;height:2px;background:#bdbdbd"></div>
<div class="t" style="left:666px;top:918px;font-size:10.8px;color:#111">Eigenverbrauchsquote</div>
<div class="t" style="left:732px;width:197px;text-align:right;top:917px;font-size:12px;font-weight:700;color:#666">84 %</div>
<div class="t" style="left:10px;top:1026px;font-size:11px;color:#555">© 2017 SMA Solar Technology AG</div>
<div class="t" style="left:187px;top:1026px;font-size:11px;color:#555">|</div>
<div class="t" style="left:201px;top:1026px;font-size:11px;color:#555">Startseite</div>
<div class="t" style="left:258px;top:1026px;font-size:11px;color:#555">|</div>
<div class="t" style="left:272px;top:1026px;font-size:11px;color:#555">Information</div>
<div class="t" style="left:340px;top:1026px;font-size:11px;color:#555">|</div>
<div class="t" style="left:354px;top:1026px;font-size:11px;color:#555">Bedienungsanleitungen</div>
<div class="t" style="left:477px;top:1026px;font-size:11px;color:#555">|</div>
<div class="t" style="left:491px;top:1026px;font-size:11px;color:#555">FAQ</div>
<div class="t" style="left:522px;top:1026px;font-size:11px;color:#555">|</div>
<div class="t" style="left:536px;top:1026px;font-size:11px;color:#555">Nutzungsbedingungen</div>
<div class="t" style="left:655px;top:1026px;font-size:11px;color:#555">|</div>
<div class="t" style="left:669px;top:1026px;font-size:11px;color:#555">Datenschutzerklärung</div>
<div class="t" style="left:786px;top:1026px;font-size:11px;color:#555">|</div>
<div class="t" style="left:800px;top:1026px;font-size:11px;color:#555">Impressum</div>

</body></html>
